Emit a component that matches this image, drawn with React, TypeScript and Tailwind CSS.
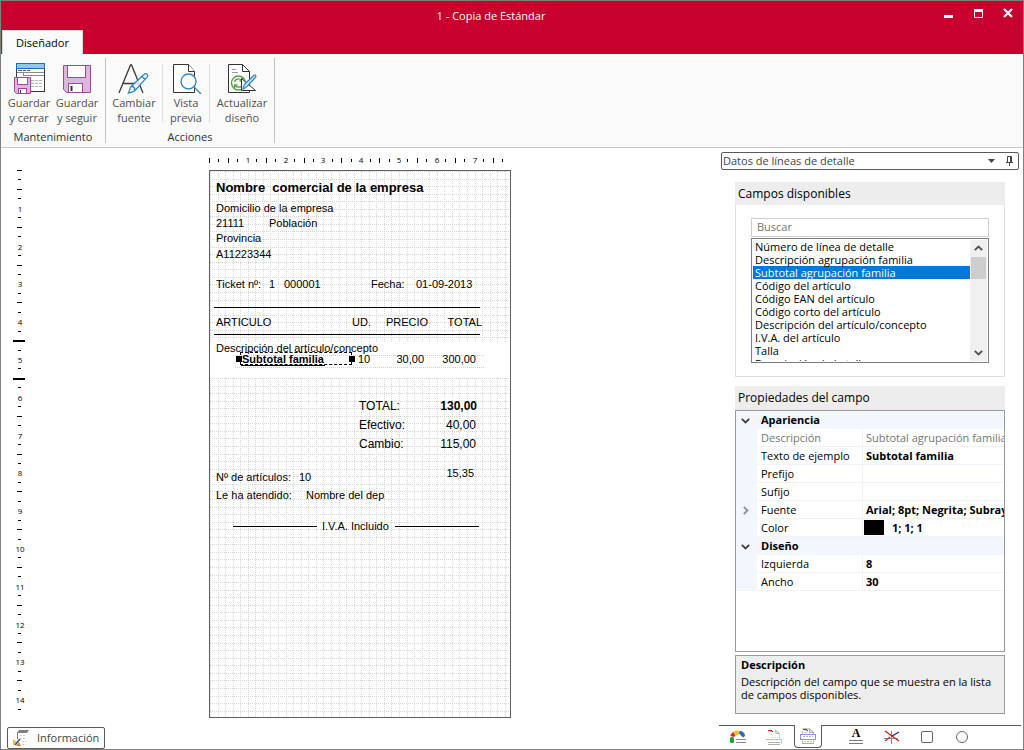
import React, { useState } from "react";

type SvgProps = { className?: string };

/* ---------- ribbon icons ---------- */

function SaveCloseIcon() {
  return (
    <svg width="32" height="32" viewBox="0 0 32 32" fill="none" aria-hidden="true">
      <rect x="3.500" y="1.500" width="28" height="28" fill="#fff" stroke="#3a3a3a" />
      <rect x="3.500" y="1.500" width="28" height="5" fill="#92c7ef" stroke="#1c6fb8" />
      <path d="M5 8.500h4M10 8.500h3M14 8.500h3" stroke="#555" />
      <path d="M4 10.500h27M11 13.500h20M10.500 11v3" stroke="#8a8a8a" />
      <path d="M18 18.500h3M22 18.500h3M26 18.500h3M18 21.500h3M22 21.500h3M26 21.500h3M18 24.500h3M22 24.500h3M26 24.500h3" stroke="#b5b5b5" />
      <path d="M1.500 15.500h16v16h-14l-2-2z" fill="#d9b8dc" stroke="#9c4a9c" />
      <rect x="4.500" y="15.500" width="10" height="7" fill="#fff" stroke="#9c4a9c" />
      <rect x="5.500" y="26.500" width="8" height="5" fill="#fff" stroke="#9c4a9c" />
      <path d="M7.500 28v3" stroke="#333" />
    </svg>
  );
}

function SaveIcon() {
  return (
    <svg width="32" height="32" viewBox="0 0 32 32" fill="none" aria-hidden="true">
      <path d="M2.500 3.500h27v27h-24l-3-3z" fill="#d9b8dc" stroke="#9c4a9c" />
      <rect x="6.500" y="3.500" width="18" height="12" fill="#fff" stroke="#9c4a9c" />
      <rect x="7.500" y="21.500" width="14" height="9" fill="#fff" stroke="#9c4a9c" />
      <path d="M10.500 24v5" stroke="#333" strokeWidth="2" />
    </svg>
  );
}

function FontIcon() {
  return (
    <svg width="32" height="32" viewBox="0 0 32 32" fill="none" aria-hidden="true">
      <path d="M1 31 12.500 3h1L25 31M5.500 21.500h16" stroke="#3a3a3a" strokeWidth="1.300" />
      <path d="M10.500 31c1-2 1-5 3-7l12.500-11.500c1-1 2-1.200 3-.3s.8 2 0 3L17 28.500c-1.500 1.500-4 1.800-6.500 2.500zM24 14.500l3 3M13.500 24c2 .5 3 1.500 3.500 4" fill="#fff" fillOpacity=".8" stroke="#2f86cc" strokeWidth="1.300" />
    </svg>
  );
}

function PreviewIcon() {
  return (
    <svg width="32" height="32" viewBox="0 0 32 32" fill="none" aria-hidden="true">
      <path d="M3.500 2.500h15l6 7v21h-21z" fill="#fff" stroke="#333" />
      <path d="M18.500 2.500v7h6" fill="#fff" stroke="#333" />
      <circle cx="18.500" cy="19.500" r="7.500" fill="#f8fcff" stroke="#2f86cc" strokeWidth="1.300" />
      <path d="m24 25 7 7" stroke="#2f86cc" strokeWidth="1.300" />
    </svg>
  );
}

function RefreshDesignIcon() {
  return (
    <svg width="32" height="32" viewBox="0 0 32 32" fill="none" aria-hidden="true">
      <path d="M2.500 2.500h14l7 7v21h-21z" fill="#fff" stroke="#333" />
      <path d="M16.500 2.500v7h7" stroke="#333" />
      <path d="M6 7.500h4M6 10.500h6" stroke="#999" />
      <circle cx="12.500" cy="21" r="7" fill="#fff" stroke="#55a545" strokeWidth="1.400" />
      <path d="M8.500 20c.5-2 2-3.200 4-3.200 1.400 0 2.600.6 3.500 1.700M16.500 16v3h-3M16.500 22c-.5 2-2 3.200-4 3.200-1.400 0-2.600-.6-3.500-1.700M8.500 26v-3h3" stroke="#55a545" strokeWidth="1.300" />
      <path d="M15.500 16.500v12h14z" fill="#fff" stroke="#333" />
      <path d="M17 27c.4-2 .6-3.500 1.800-5L28 13.200c.8-.7 2.500.5 1.800 1.800L21.500 24c-1 1.400-2.700 2-4.500 3z" fill="#c8e2f6" stroke="#2f86cc" strokeWidth="1.200" />
    </svg>
  );
}

/* ---------- panel icons ---------- */

function PinIcon() {
  return (
    <svg width="9" height="11" viewBox="0 0 9 11" fill="none" aria-hidden="true">
      <path d="M2.500 6V.5h4V6M1 6.500h7M4.500 7v3M5.500 1v5" stroke="#444" />
    </svg>
  );
}

function Chevron({ className }: SvgProps) {
  return (
    <svg width="9" height="9" viewBox="0 0 9 9" fill="none" className={className} aria-hidden="true">
      <path d="m.8 2.800 3.700 3.700 3.700-3.700" stroke="currentColor" strokeWidth="1.800" />
    </svg>
  );
}

function GaugeIcon() {
  return (
    <svg width="16" height="14" viewBox="0 0 16 14" aria-hidden="true">
      <rect x="0" y="7" width="4" height="6" rx="1.500" fill="#23a02e" />
      <path d="M.5 6C1 4 2 2.500 3.500 2L6 4.500 4 7z" fill="#e2231a" />
      <ellipse cx="6.500" cy="2.800" rx="2.800" ry="2.300" fill="#f7c313" />
      <path d="M9.500 1c3 0 5.500 2 5.500 5l-2 1.500L9 3.500z" fill="#1f6fc0" />
      <path d="M6 9.500h10M6 12.500h10" stroke="#8a8a8a" />
    </svg>
  );
}

function PageFooterIcon() {
  return (
    <svg width="16" height="16" viewBox="0 0 16 16" fill="none" aria-hidden="true">
      <path d="M13.500 5v5" stroke="#d0d0d0" />
      <path d="m9.500 1.500 4 3h-3.500z" stroke="#b0b0b0" />
      <path d="M2 1.500h4M4 1.500v1" stroke="#c22" />
      <path d="M5.500 2.500h1.500" stroke="#22c" />
      <path d="M5 5.500h3M5 8.500h7" stroke="#dcdcdc" strokeDasharray="2 1" />
      <path d="M2 13.500h12M2 15.500h12" stroke="#b0b0b0" />
      <path d="M0 10.500h15.500v4" stroke="#9ccbe8" />
    </svg>
  );
}

function DetailIcon() {
  return (
    <svg width="18" height="16" viewBox="0 0 18 16" fill="none" aria-hidden="true">
      <path d="M3.500 3v12.500h11V4.500l-4-4h-7" stroke="#c0c0c0" />
      <path d="m10.500 1 4 3.500h-4z" stroke="#aaa" />
      <path d="M4 1.500h4M6 1.500v1" stroke="#c22" />
      <path d="M7.500 2.500h1.500" stroke="#22c" />
      <path d="M5 4.500h4" stroke="#ccc" />
      <path d="M3 15.500h12" stroke="#aaa" />
      <rect x="1.500" y="6.500" width="15" height="5" fill="#fff" stroke="#9090f4" />
      <path d="M4 8.500h10M5 13.500h8" stroke="#bbb" strokeDasharray="2 1" />
    </svg>
  );
}

function LineIcon() {
  return (
    <svg width="16" height="14" viewBox="0 0 16 14" fill="none" aria-hidden="true">
      <path d="M0 8.500h14M7.500 1v13" stroke="#888" />
      <path d="M1 1 15 11" stroke="#e02020" strokeWidth="1.400" />
      <path d="M1 11 6 7" stroke="#e02020" strokeWidth="1.400" />
      <path d="M8 6 15 2" stroke="#2020d0" strokeWidth="1.400" />
    </svg>
  );
}

function InfoIcon() {
  return (
    <svg width="16" height="16" viewBox="0 0 16 16" fill="none" aria-hidden="true">
      <path d="M6 0h10l-2 3H4z" fill="#808080" />
      <path d="M4.500 2v7" stroke="#808080" />
      <path d="M7 5.500h6M7 8.500h6M9 11.500h4M9 14.500h4" stroke="#ccc" strokeDasharray="2 1" />
      <path d="M0 9l4 3-4 4z" fill="#f2bd4b" />
      <path d="m3 16 3-4 2 4z" fill="#d98a1c" />
      <path d="m2 15 5-6" stroke="#2c5878" strokeWidth="1.500" />
    </svg>
  );
}

/* ---------- rulers and grid ---------- */

const STEP = 9.45;
const steps = (n: number) => Array.from({ length: n }, (_, i) => i);

function HorizontalRuler() {
  return (
    <svg width="302" height="22" className="block overflow-visible" aria-hidden="true">
      {steps(32).map((i) => {
        const x = Math.round(i * STEP);
        if (i > 0 && i % 4 === 0) {
          return (
            <text key={i} x={x + 1} y="15" textAnchor="middle" fontSize="8" className="font-['Open_Sans',sans-serif]">
              {i / 4}
            </text>
          );
        }
        return i % 2 === 0 ? (
          <rect key={i} x={x} y="10" width="1" height="5" />
        ) : (
          <rect key={i} x={x} y="11" width="1" height="3" />
        );
      })}
    </svg>
  );
}

function VerticalRuler() {
  return (
    <svg width="36" height="570" className="block shrink-0" aria-hidden="true">
      {steps(58).map((i) => {
        const y = 22 + Math.round(i * STEP);
        if (i === 18 || i === 22) return <rect key={i} x="12" y={y} width="12" height="2" />;
        if (i > 0 && i % 4 === 0) {
          return (
            <text key={i} x="19" y={y + 4} textAnchor="middle" fontSize="8" className="font-['Open_Sans',sans-serif]">
              {i / 4}
            </text>
          );
        }
        return i % 2 === 0 ? (
          <rect key={i} x="16" y={y} width="5" height="1" />
        ) : (
          <rect key={i} x="17" y={y} width="3" height="1" />
        );
      })}
    </svg>
  );
}

function DotGrid({ width, height }: { width: number; height: number }) {
  const cell = 7.56;
  return (
    <svg width={width} height={height} className="block" stroke="#d6d6d6" strokeDasharray="1 1" aria-hidden="true">
      {steps(Math.ceil(width / cell)).map((i) => {
        const x = Math.round(i * cell) + 0.5;
        return <line key={i} x1={x} x2={x} y1="0" y2={height} />;
      })}
      {steps(Math.ceil(height / cell)).map((i) => {
        const y = Math.round(i * cell) + 0.5;
        return <line key={i} x1="0" x2={width} y1={y} y2={y} />;
      })}
    </svg>
  );
}

/* ---------- ticket design surface ---------- */

const fields: { text: string; className: string }[] = [
  { text: "Nombre  comercial de la empresa", className: "left-1.5 top-[9px] text-[13px] font-bold" },
  { text: "Domicilio de la empresa", className: "left-1.5 top-[29px] text-[11px]" },
  { text: "21111", className: "left-1.5 top-[44px] text-[11px]" },
  { text: "Población", className: "left-[59px] top-[44px] text-[11px]" },
  { text: "Provincia", className: "left-1.5 top-[59px] text-[11px]" },
  { text: "A11223344", className: "left-1.5 top-[75px] text-[11px]" },
  { text: "Ticket nº:", className: "left-1.5 top-[105px] text-[11px]" },
  { text: "1", className: "left-[59px] top-[105px] text-[11px]" },
  { text: "000001", className: "left-[74px] top-[105px] text-[11px]" },
  { text: "Fecha:", className: "left-[161px] top-[105px] text-[11px]" },
  { text: "01-09-2013", className: "left-[206px] top-[105px] text-[11px]" },
  { text: "ARTICULO", className: "left-1.5 top-[143px] text-[11px]" },
  { text: "UD.", className: "left-[142px] top-[143px] text-[11px]" },
  { text: "PRECIO", className: "left-[176px] top-[143px] text-[11px]" },
  { text: "TOTAL", className: "right-[28px] top-[143px] text-[11px]" },
  { text: "Descripción del artículo/concepto", className: "left-1.5 top-[169px] text-[11px]" },
  { text: "10", className: "left-[148px] top-[180px] text-[11px]" },
  { text: "30,00", className: "right-[86px] top-[180px] text-[11px]" },
  { text: "300,00", className: "right-[34px] top-[180px] text-[11px]" },
  { text: "TOTAL:", className: "left-[149px] top-[227px] text-[12px]" },
  { text: "130,00", className: "right-[33px] top-[227px] text-[12px] font-bold" },
  { text: "Efectivo:", className: "left-[149px] top-[246px] text-[12px]" },
  { text: "40,00", className: "right-[34px] top-[246px] text-[12px]" },
  { text: "Cambio:", className: "left-[149px] top-[265px] text-[12px]" },
  { text: "115,00", className: "right-[34px] top-[265px] text-[12px]" },
  { text: "15,35", className: "right-[36px] top-[294px] text-[11px]" },
  { text: "Nº de artículos:", className: "left-1.5 top-[298px] text-[11px]" },
  { text: "10", className: "left-[89px] top-[298px] text-[11px]" },
  { text: "Le ha atendido:", className: "left-1.5 top-[316px] text-[11px]" },
  { text: "Nombre del dep", className: "left-[96px] top-[316px] text-[11px]" },
  { text: "I.V.A. Incluido", className: "left-[112px] top-[347px] text-[11px]" },
];

const rules = [
  "left-1 top-[136px] w-[266px]",
  "left-1 top-[163px] w-[266px]",
  "left-[23px] top-[355px] w-[84px]",
  "left-[185px] top-[355px] w-[84px]",
];

function TicketPage() {
  return (
    <div className="relative h-[548px] w-[302px] border border-[#5f5f5f] bg-white font-['Liberation_Sans',Arial,sans-serif] text-black">
      <DotGrid width={300} height={171} />
      <div className="h-[36px]" />
      <DotGrid width={300} height={339} />
      <div className="absolute left-[25px] top-[184px] h-[13px] w-[249px] border-y border-dotted border-[#cfcfcf]" />
      {rules.map((r) => (
        <div key={r} className={`absolute h-px bg-black ${r}`} />
      ))}
      {fields.map((f) => (
        <span key={f.className} className={`absolute whitespace-pre leading-4 ${f.className}`}>
          {f.text}
        </span>
      ))}
      <div className="absolute left-[30px] top-[181px] h-[13px] w-[112px] border border-dashed border-black text-[11px] font-bold leading-[13px]">
        <span className="block w-[84px] border-b border-black pl-px leading-3">Subtotal familia</span>
        <span className="absolute -left-[5px] top-[3px] size-1.5 bg-black" />
        <span className="absolute -right-1 top-[3px] size-1.5 bg-black" />
      </div>
    </div>
  );
}

/* ---------- ribbon ---------- */

function RibbonButton({ icon, lines, className }: { icon: React.ReactNode; lines: [string, string]; className: string }) {
  return (
    <button type="button" className={`flex flex-col items-center pt-1 text-[11px] leading-[15px] text-[#505050] ${className}`}>
      {icon}
      <span className="mt-px whitespace-nowrap">
        {lines[0]}
        <br />
        {lines[1]}
      </span>
    </button>
  );
}

function RibbonGroup({ label, children }: { label: string; children: React.ReactNode }) {
  return (
    <section className="my-1 flex flex-col border-r border-[#c4c4c4]" aria-label={label}>
      <div className="flex h-[68px]">{children}</div>
      <div className="pt-1 text-center text-[11px] leading-4 text-[#303030]">{label}</div>
    </section>
  );
}

/* ---------- side panel ---------- */

const available = [
  "Número de línea de detalle",
  "Descripción agrupación familia",
  "Subtotal agrupación familia",
  "Código del artículo",
  "Código EAN del artículo",
  "Código corto del artículo",
  "Descripción del artículo/concepto",
  "I.V.A. del artículo",
  "Talla",
  "Descripción de la talla",
];

function FieldList() {
  const [selected, setSelected] = useState(2);
  return (
    <div className="flex h-[125px] border border-[#7a7d84] p-px">
      <div role="listbox" aria-label="Campos disponibles" className="flex-1 overflow-hidden">
        {available.map((name, i) => (
          <button
            key={name}
            type="button"
            role="option"
            aria-selected={i === selected}
            onClick={() => setSelected(i)}
            className={`block w-full whitespace-nowrap px-0.5 text-left text-[11px] leading-[13px] ${
              i === selected ? "bg-[#0078d7] text-white" : "text-black"
            }`}
          >
            {name}
          </button>
        ))}
      </div>
      <div className="flex w-[17px] flex-col items-center bg-[#f0f0f0] text-[#505050]">
        <button type="button" aria-label="Subir" className="flex h-[17px] w-full items-center justify-center">
          <Chevron className="rotate-180" />
        </button>
        <div className="h-[22px] w-[15px] bg-[#cdcdcd]" />
        <button type="button" aria-label="Bajar" className="mt-auto flex h-[17px] w-full items-center justify-center">
          <Chevron />
        </button>
      </div>
    </div>
  );
}

type Prop = { name: string; value: string; muted?: boolean; expandable?: boolean; swatch?: boolean };

const appearance: Prop[] = [
  { name: "Descripción", value: "Subtotal agrupación familia", muted: true },
  { name: "Texto de ejemplo", value: "Subtotal familia" },
  { name: "Prefijo", value: "" },
  { name: "Sufijo", value: "" },
  { name: "Fuente", value: "Arial; 8pt; Negrita; Subrayado", expandable: true },
  { name: "Color", value: "1; 1; 1", swatch: true },
];

const layout: Prop[] = [
  { name: "Izquierda", value: "8" },
  { name: "Ancho", value: "30" },
];

function PropertyGroup({ title, items }: { title: string; items: Prop[] }) {
  return (
    <tbody>
      <tr className="h-[18px] bg-[#f3f6fc]">
        <td className="p-0">
          <Chevron className="ml-[5px] text-[#404040]" />
        </td>
        <th colSpan={2} className="p-0 pl-1 text-left font-bold">
          {title}
        </th>
      </tr>
      {items.map((p) => (
        <tr key={p.name} className="h-[18px]">
          <td className="bg-[#f3f6fc] p-0">
            {p.expandable && <Chevron className="ml-[5px] -rotate-90 text-[#909090]" />}
          </td>
          <th className={`border-b border-r border-[#f0f3fa] p-0 pl-1 text-left font-normal ${p.muted ? "text-[#767676]" : ""}`}>
            <label htmlFor={`prop-${p.name}`}>{p.name}</label>
          </th>
          <td className="border-b border-[#f0f3fa] p-0">
            <div className="flex items-center">
              {p.swatch && <span className="ml-px h-[15px] w-5 shrink-0 bg-black" />}
              <input
                id={`prop-${p.name}`}
                defaultValue={p.value}
                readOnly={p.muted}
                className={`h-[17px] w-full min-w-0 bg-transparent outline-none ${p.swatch ? "pl-2" : "pl-[3px]"} ${
                  p.muted ? "text-[#767676]" : "font-bold"
                }`}
              />
            </div>
          </td>
        </tr>
      ))}
    </tbody>
  );
}

function SidePanel() {
  return (
    <aside className="mr-0.5 flex w-[302px] shrink-0 flex-col pt-1">
      <div className="ml-0.5 mr-0.5 flex h-[18px] items-center rounded-[2px] border border-[#5a5a5a] text-[11px] text-[#444]">
        <div className="relative flex h-full flex-1 items-center">
          <select aria-label="Sección" className="h-full w-full appearance-none bg-transparent pl-px leading-4 outline-none">
            <option>Datos de líneas de detalle</option>
          </select>
          <svg width="7" height="4" className="pointer-events-none absolute right-0" aria-hidden="true">
            <path d="M0 0h7L3.500 4z" fill="#444" />
          </svg>
        </div>
        <button type="button" aria-label="Fijar panel" className="ml-2.5 mr-1">
          <PinIcon />
        </button>
      </div>

      <section className="ml-4 mr-4 mt-3 border border-[#dedede]">
        <h2 className="-mx-px -mt-px bg-[#ededed] pl-[3px] text-[12px] leading-[23px]">Campos disponibles</h2>
        <div className="px-[15px] pb-[13px] pt-[13px]">
          <input
            type="search"
            aria-label="Buscar campo"
            placeholder="Buscar"
            className="mb-px block h-[19px] w-full border border-[#cfcfcf] px-[5px] pb-0.5 text-[11px] outline-none placeholder:text-[#767676]"
          />
          <FieldList />
        </div>
      </section>

      <section className="ml-4 mr-4 mt-[9px] flex flex-1 flex-col">
        <h2 className="bg-[#ededed] pl-[3px] text-[12px] leading-[24px]">Propiedades del campo</h2>
        <div className="flex-1 overflow-hidden border border-[#9a9a9a] text-[11px]">
          <table className="w-full table-fixed border-separate border-spacing-0 leading-4">
            <colgroup>
              <col className="w-[21px]" />
              <col className="w-[106px]" />
              <col />
            </colgroup>
            <PropertyGroup title="Apariencia" items={appearance} />
            <PropertyGroup title="Diseño" items={layout} />
          </table>
        </div>
        <div className="mt-[3px] h-[59px] border border-[#9a9a9a] bg-[#eeeeee] px-[5px] py-px text-[11px]">
          <p className="font-bold leading-4">Descripción</p>
          <p className="mt-0.5 leading-[13px]">Descripción del campo que se muestra en la lista de campos disponibles.</p>
        </div>
      </section>

      <nav className="mt-[11px] flex h-6 border-t border-[#5a5a5a] pb-px text-[#666]" aria-label="Secciones y elementos">
        <button type="button" aria-label="General" className="flex w-[38px] items-center justify-center">
          <GaugeIcon />
        </button>
        <button type="button" aria-label="Pie de página" className="flex w-[33px] items-center justify-center">
          <PageFooterIcon />
        </button>
        <button
          type="button"
          aria-label="Líneas de detalle"
          className="-mt-px ml-1 flex w-[28px] items-center justify-center rounded-b-[4px] border border-t-0 border-[#5a5a5a] bg-white"
        >
          <DetailIcon />
        </button>
        <button type="button" aria-label="Texto" className="ml-4 flex w-9 flex-col items-center">
          <span className="font-['Liberation_Serif',serif] text-[12px] font-bold leading-[14px] text-black">A</span>
          <span className="h-[4px] w-[14px] border-y border-[#777]" />
        </button>
        <button type="button" aria-label="Línea" className="flex w-9 items-center justify-center">
          <LineIcon />
        </button>
        <button type="button" aria-label="Rectángulo" className="flex w-[34px] items-center justify-center">
          <span className="size-3 rounded-[2px] border border-[#666]" />
        </button>
        <button type="button" aria-label="Elipse" className="flex w-9 items-center justify-center">
          <span className="size-3 rounded-full border border-[#666]" />
        </button>
      </nav>
    </aside>
  );
}

/* ---------- window ---------- */

export default function App() {
  return (
    <div className="flex min-h-screen flex-col border border-[#808080] bg-white font-['Open_Sans','Noto_Sans',sans-serif] text-black">
      <header className="flex h-[53px] items-start bg-[#c8002d] text-white">
        <div role="tablist" className="flex w-[84px] self-end pl-px">
          <button
            type="button"
            role="tab"
            aria-selected="true"
            className="h-6 w-[81px] border border-b-0 border-[#d8d8d8] bg-[#fafafa] pt-px text-[11px] text-black"
          >
            Diseñador
          </button>
        </div>
        <h1 className="flex-1 pr-9 pt-[7px] text-center text-[11px] leading-4">1 - Copia de Estándar</h1>
        <div className="flex h-6 items-center">
          <button type="button" aria-label="Minimizar" className="flex w-[30px] justify-center">
            <svg width="9" height="9" aria-hidden="true">
              <rect y="6" width="9" height="3" fill="#fff" />
            </svg>
          </button>
          <button type="button" aria-label="Maximizar" className="flex w-[30px] justify-center">
            <svg width="9" height="9" aria-hidden="true">
              <path d="M.5 1h8v7.500h-8zM0 1.500h9" fill="none" stroke="#fff" />
              <rect width="9" height="3" fill="#fff" />
            </svg>
          </button>
          <button type="button" aria-label="Cerrar" className="flex w-[30px] justify-center">
            <svg width="10" height="10" aria-hidden="true">
              <path d="m1 1 8 8M9 1 1 9" fill="none" stroke="#fff" strokeWidth="2.200" />
            </svg>
          </button>
        </div>
      </header>

      <div className="flex h-[94px] border-b border-[#c8c8c8] bg-[#fafafa]">
        <RibbonGroup label="Mantenimiento">
          <div className="flex px-1">
            <RibbonButton className="w-12" icon={<SaveCloseIcon />} lines={["Guardar", "y cerrar"]} />
            <RibbonButton className="w-12" icon={<SaveIcon />} lines={["Guardar", "y seguir"]} />
          </div>
        </RibbonGroup>
        <RibbonGroup label="Acciones">
          <RibbonButton className="w-14" icon={<FontIcon />} lines={["Cambiar", "fuente"]} />
          <div className="mb-0.5 mt-1.5 w-px bg-[#dedede]" />
          <RibbonButton className="w-[46px]" icon={<PreviewIcon />} lines={["Vista", "previa"]} />
          <div className="mb-0.5 mt-1.5 w-px bg-[#dedede]" />
          <RibbonButton className="w-16" icon={<RefreshDesignIcon />} lines={["Actualizar", "diseño"]} />
        </RibbonGroup>
      </div>

      <div className="flex flex-1">
        <main className="flex flex-1 flex-col">
          <div className="flex">
            <VerticalRuler />
            <div className="flex flex-1 justify-center pr-9">
              <div>
                <HorizontalRuler />
                <TicketPage />
              </div>
            </div>
          </div>
          <button
            type="button"
            className="ml-1.5 mt-auto flex h-[22px] w-[98px] items-center gap-2 rounded-[2px] border border-[#5a5a5a] pl-[5px] text-[11px] text-[#444]"
          >
            <InfoIcon />
            Información
          </button>
        </main>
        <SidePanel />
      </div>
    </div>
  );
}
